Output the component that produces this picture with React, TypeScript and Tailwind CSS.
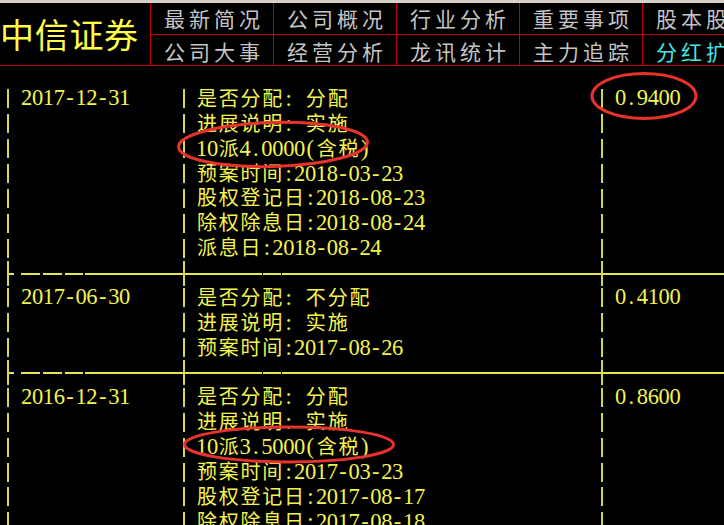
import React from "react";

const isWide = (ch: string) => ch.charCodeAt(0) > 0x2e80;

function Mono({ text }: { text: string }) {
  return (
    <span className="whitespace-pre leading-[24px]">
      {Array.from(text).map((ch, i) =>
        isWide(ch) ? (
          <span
            key={i}
            className="inline-block w-[21.8px] text-center text-[20px] leading-[24px] font-['Noto_Sans_CJK_SC',sans-serif]"
          >
            {ch}
          </span>
        ) : (
          <span
            key={i}
            className="inline-block w-[10.9px] text-center text-[22.5px] leading-[24px] font-['Liberation_Serif','Noto_Sans_CJK_SC',serif]"
          >
            {ch}
          </span>
        )
      )}
    </span>
  );
}

function Bar() {
  return <div className="h-[19px] w-[2px] shrink-0 bg-[#d6d64a]" />;
}

function Line({ date, content, value }: { date?: string; content: string; value?: string }) {
  return (
    <div className="flex h-[24.88px] items-center">
      <div className="w-[7px] shrink-0" />
      <Bar />
      <div className="w-[174px] shrink-0 pl-[12px]">{date ? <Mono text={date} /> : null}</div>
      <Bar />
      <div className="w-[416px] shrink-0 pl-[11px]">
        <Mono text={content} />
      </div>
      <Bar />
      <div className="pl-[12px]">{value ? <Mono text={value} /> : null}</div>
    </div>
  );
}

function Separator() {
  return (
    <div className="flex h-[24.88px] items-center">
      <div className="w-[7px] shrink-0" />
      <div className="h-full w-[2px] shrink-0 bg-[#d6d64a]" />
      <div className="flex w-[174px] shrink-0 items-center pt-[1px]">
        <div className="h-[2px] w-[5px] bg-[#e6e64c]" />
        <div className="w-[7px]" />
        <div className="h-[2px] w-[19px] bg-[#e6e64c]" />
        <div className="w-[3px]" />
        <div className="h-[2px] w-[19px] bg-[#e6e64c]" />
        <div className="w-[3px]" />
        <div className="h-[2px] w-[18px] bg-[#e6e64c]" />
        <div className="w-[2px]" />
        <div className="h-[2px] flex-1 bg-[#e6e64c]" />
      </div>
      <div className="h-full w-[2px] shrink-0 bg-[#d6d64a]" />
      <div className="flex w-[416px] shrink-0 items-center pt-[1px]">
        <div className="h-[2px] w-[77px] bg-[#e6e64c]" />
        <div className="w-[1px]" />
        <div className="h-[2px] w-[18px] bg-[#e6e64c]" />
        <div className="w-[1px]" />
        <div className="h-[2px] flex-1 bg-[#e6e64c]" />
      </div>
      <div className="h-full w-[2px] shrink-0 bg-[#d6d64a]" />
      <div className="flex flex-1 items-center pt-[1px]">
        <div className="h-[2px] flex-1 bg-[#e6e64c]" />
      </div>
    </div>
  );
}

type Record = { date: string; value: string; lines: string[] };

const records: Record[] = [
  {
    date: "2017-12-31",
    value: "0.9400",
    lines: [
      "是否分配: 分配",
      "进展说明: 实施",
      "10派4.0000(含税)",
      "预案时间:2018-03-23",
      "股权登记日:2018-08-23",
      "除权除息日:2018-08-24",
      "派息日:2018-08-24",
    ],
  },
  {
    date: "2017-06-30",
    value: "0.4100",
    lines: ["是否分配: 不分配", "进展说明: 实施", "预案时间:2017-08-26"],
  },
  {
    date: "2016-12-31",
    value: "0.8600",
    lines: [
      "是否分配: 分配",
      "进展说明: 实施",
      "10派3.5000(含税)",
      "预案时间:2017-03-23",
      "股权登记日:2017-08-17",
      "除权除息日:2017-08-18",
      "派息日:2017-08-18",
    ],
  },
];

const navTop = ["最新简况", "公司概况", "行业分析", "重要事项", "股本股东"];
const navBottom = ["公司大事", "经营分析", "龙讯统计", "主力追踪", "分红扩股"];

export default function App() {
  return (
    <div className="relative h-[525px] w-[724px] overflow-hidden bg-black text-[#f4f450]">
      <div className="h-[3px] bg-[#d4d0c8]" />
      <div className="flex h-[63px] border-b border-[#c40000]">
        <div className="flex w-[150px] shrink-0 items-center font-['Noto_Sans_CJK_SC',sans-serif] text-[34px] leading-none tracking-[0.7px] text-[#ffff48]">
          中信证券
        </div>
        <div className="flex shrink-0 flex-col">
          <div className="flex h-[32px] border-b border-[#c40000]">
            {navTop.map((t) => (
              <div
                key={t}
                className="flex w-[123px] shrink-0 items-center justify-center border-l border-[#c40000] pl-[4px] font-['Noto_Sans_CJK_SC',sans-serif] text-[21px] leading-none tracking-[4px] whitespace-nowrap text-[#c4c4c4]"
              >
                {t}
              </div>
            ))}
          </div>
          <div className="flex h-[30px]">
            {navBottom.map((t, i) => (
              <div
                key={t}
                className={
                  i === 4
                    ? "flex w-[123px] shrink-0 items-center justify-center border-l border-[#c40000] pt-[2px] pl-[4px] font-['Noto_Sans_CJK_SC',sans-serif] text-[21px] leading-none tracking-[4px] whitespace-nowrap text-[#48e4e4]"
                    : "flex w-[123px] shrink-0 items-center justify-center border-l border-[#c40000] pt-[2px] pl-[4px] font-['Noto_Sans_CJK_SC',sans-serif] text-[21px] leading-none tracking-[4px] whitespace-nowrap text-[#c4c4c4]"
                }
              >
                {t}
              </div>
            ))}
          </div>
        </div>
      </div>

      <div className="pt-[20.5px]">
        {records.map((r, ri) => (
          <React.Fragment key={r.date}>
            {r.lines.map((l, li) => (
              <Line
                key={li}
                date={li === 0 ? r.date : undefined}
                value={li === 0 ? r.value : undefined}
                content={l}
              />
            ))}
            {ri < records.length - 1 ? <Separator /> : null}
          </React.Fragment>
        ))}
      </div>

      <svg
        className="pointer-events-none absolute left-0 top-0"
        width="724"
        height="525"
        viewBox="0 0 724 525"
      >
        <ellipse cx="644" cy="96" rx="52" ry="22.5" fill="none" stroke="#e8322c" strokeWidth="3" />
        <ellipse
          cx="273"
          cy="144.5"
          rx="94.5"
          ry="22"
          fill="none"
          stroke="#e8322c"
          strokeWidth="3"
          transform="rotate(-1.5 273 144.5)"
        />
        <ellipse
          cx="289"
          cy="444.5"
          rx="104.5"
          ry="17.5"
          fill="none"
          stroke="#e8322c"
          strokeWidth="3"
        />
      </svg>
    </div>
  );
}
